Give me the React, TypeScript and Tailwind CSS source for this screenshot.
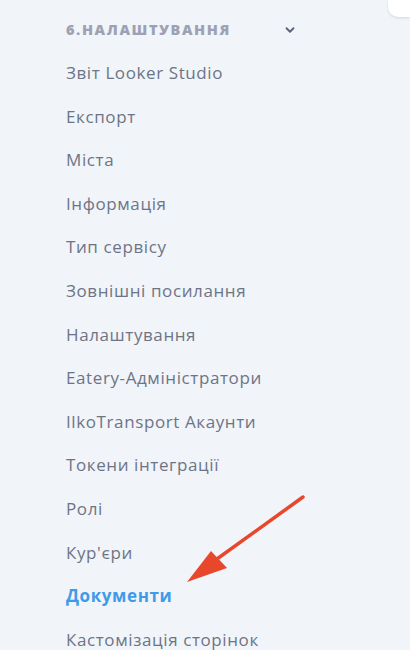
import React from "react";

const items = [
  "Звіт Looker Studio",
  "Експорт",
  "Міста",
  "Інформація",
  "Тип сервісу",
  "Зовнішні посилання",
  "Налаштування",
  "Eatery-Адміністратори",
  "IlkoTransport Акаунти",
  "Токени інтеграції",
  "Ролі",
  "Кур'єри",
  "Документи",
  "Кастомізація сторінок",
];

export default function App() {
  return (
    <div
      className="relative w-[410px] h-[650px] overflow-hidden bg-[#f1f4f9]"
      style={{ fontFamily: "'Open Sans', 'Noto Sans', sans-serif" }}
    >
      <div className="absolute right-0 top-0 w-[22px] h-[17px] bg-white rounded-bl-[10px] shadow-[0_1px_3px_rgba(0,0,0,0.12)]" />
      <div className="pl-[66px] pt-[20px] w-[310px]">
        <div className="flex items-center justify-between h-[20px] pr-[13px]">
          <span className="text-[14.5px] font-extrabold tracking-[1.6px] text-[#9ca2b4]">
            6.НАЛАШТУВАННЯ
          </span>
          <svg width="14" height="14" viewBox="0 0 24 24" fill="none" stroke="#5b6478" strokeWidth="3.2" strokeLinecap="round" strokeLinejoin="round">
            <path d="M6 9l6 6 6-6" />
          </svg>
        </div>
        <div className="flex flex-col mt-[11px]">
          {items.map((t) => (
            <div
              key={t}
              className={
                t === "Документи"
                  ? "h-[43.6px] flex items-center text-[17px] tracking-[0.6px] font-bold text-[#3f9be8]"
                  : "h-[43.6px] flex items-center text-[17px] tracking-[0.6px] text-[#6d7486]"
              }
            >
              {t}
            </div>
          ))}
        </div>
      </div>
      <svg className="absolute left-0 top-0" width="410" height="650" viewBox="0 0 410 650">
        <line x1="303" y1="497" x2="210" y2="564" stroke="#e8472b" strokeWidth="3.5" strokeLinecap="round" />
        <polygon points="187,582 211,551 227,568" fill="#e8472b" />
      </svg>
    </div>
  );
}
